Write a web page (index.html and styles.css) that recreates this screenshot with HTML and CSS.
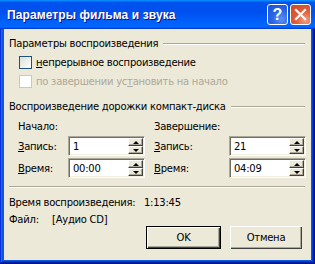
FILE: index.html
```html
<!DOCTYPE html>
<html lang="ru">
<head>
<meta charset="utf-8">
<title>Параметры фильма и звука</title>
<link rel="stylesheet" href="styles.css">
</head>
<body>
<div class="window">
  <div class="titlebar">
    <span class="title">Параметры фильма и звука</span>
    <div class="tbtns">
      <div class="tbtn help">?</div>
      <div class="tbtn close">
        <svg width="13" height="13" viewBox="0 0 13 13"><path d="M2 2 L11 11 M11 2 L2 11" stroke="#fff" stroke-width="2.2" stroke-linecap="square"/></svg>
      </div>
    </div>
  </div>
  <div class="client">
    <div class="group-head"><span>Параметры воспроизведения</span><div class="rule"></div></div>
    <div class="checks">
      <div class="check"><span class="box"></span><span><u>н</u>епрерывное воспроизведение</span></div>
      <div class="check disabled"><span class="box"></span><span>по завершении ус<u>т</u>ановить на начало</span></div>
    </div>
    <div class="group-head second"><span>Воспроизведение дорожки компакт-диска</span><div class="rule"></div></div>
    <div class="track">
      <div class="col-head">Начало:</div>
      <div class="col-head right">Завершение:</div>
      <div class="lbl"><u>З</u>апись:</div>
      <div class="field"><span class="val">1</span><div class="spin"><div class="sb up"></div><div class="sb down"></div></div></div>
      <div></div>
      <div class="lbl"><u>З</u>апись:</div>
      <div class="field"><span class="val">21</span><div class="spin"><div class="sb up"></div><div class="sb down"></div></div></div>
      <div class="lbl"><u>В</u>ремя:</div>
      <div class="field"><span class="val">00:00</span><div class="spin"><div class="sb up"></div><div class="sb down"></div></div></div>
      <div></div>
      <div class="lbl"><u>В</u>ремя:</div>
      <div class="field"><span class="val">04:09</span><div class="spin"><div class="sb up"></div><div class="sb down"></div></div></div>
    </div>
    <div class="sep"></div>
    <div class="info">
      <div class="info-row"><span class="dur-label">Время воспроизведения:</span><span>1:13:45</span></div>
      <div class="info-row"><span class="file-label">Файл:</span><span>[Аудио CD]</span></div>
    </div>
    <div class="buttons">
      <div class="btn default">OK</div>
      <div class="btn cancel">Отмена</div>
    </div>
  </div>
</div>
</body>
</html>
```

FILE: styles.css
```css
html, body {
  margin: 0;
  padding: 0;
  background: #ECE9D8;
}
.window {
  width: 315px;
  height: 264px;
  box-sizing: border-box;
  padding: 0 4px 4px 4px;
  background: #0A5BE0;
  box-shadow: inset -1px -1px #00138c, inset 1px 0 #0831d9, inset -2px -2px #001ea0, inset 2px 0 #166aee, inset -3px -3px #003bda, inset 3px 0 #0855dd;
  display: flex;
  flex-direction: column;
  font-family: "DejaVu Sans", sans-serif;
  font-size: 10px;
  letter-spacing: -0.25px;
  color: #000;
}
.titlebar {
  height: 29px;
  margin: 0 -4px;
  padding: 0 4px 0 7px;
  box-sizing: border-box;
  background: linear-gradient(180deg, #0997ff, #0053ee 8%, #0050ee 40%, #06f 88%, #06f 93%, #005bff 95%, #003dd7 96%, #003dd7);
  display: flex;
  align-items: center;
  justify-content: space-between;
}
.title {
  color: #fff;
  font-family: "Liberation Sans", sans-serif;
  font-weight: bold;
  font-size: 12px;
  letter-spacing: 0.1px;
  text-shadow: 1px 1px #0f1089;
}
.tbtns {
  display: flex;
  gap: 2px;
}
.tbtn {
  width: 21px;
  height: 21px;
  box-sizing: border-box;
  border: 1px solid #fff;
  border-radius: 3px;
  display: flex;
  align-items: center;
  justify-content: center;
}
.help {
  background: radial-gradient(circle at 70% 75%, #5c91f5 0%, #2b66e6 45%, #1b50d6 100%);
  color: #fff;
  font-family: "Liberation Sans", sans-serif;
  font-weight: bold;
  font-size: 16px;
  letter-spacing: 0;
  line-height: 1;
}
.close {
  background: radial-gradient(circle at 75% 80%, #f2a183 0%, #e2603f 40%, #cd4423 100%);
}
.client {
  flex: 1;
  background: #ECE9D8;
  padding: 8px 6px 0 5px;
  display: flex;
  flex-direction: column;
}
.group-head {
  display: flex;
  align-items: center;
  gap: 5px;
  height: 13px;
  line-height: 13px;
  white-space: nowrap;
}
.group-head.second {
  margin-top: 12px;
}
.rule {
  flex: 1;
  height: 1px;
  background: #ACA899;
  border-bottom: 1px solid #fff;
}
.checks {
  display: flex;
  flex-direction: column;
  gap: 6px;
  margin-top: 6px;
  padding-left: 10px;
}
.check {
  display: flex;
  align-items: center;
  gap: 4px;
  height: 13px;
  white-space: nowrap;
}
.box {
  width: 13px;
  height: 13px;
  box-sizing: border-box;
  border: 1px solid #1C5180;
  background: linear-gradient(135deg, #DCDCD7, #fff);
}
.check.disabled {
  color: #ACA899;
}
.check.disabled .box {
  border-color: #CAC8BB;
  background: #fff;
}
.track {
  display: grid;
  grid-template-columns: 50px 77px 9px 75px 77px;
  grid-template-rows: 14px 20px 20px;
  row-gap: 2px;
  margin-top: 7px;
  padding-left: 9px;
}
.col-head {
  grid-column: span 3;
  line-height: 13px;
}
.col-head.right {
  grid-column: span 2;
}
.lbl {
  display: flex;
  align-items: center;
}
.field {
  box-sizing: border-box;
  border: 1px solid;
  border-color: #ACA899 #fff #fff #ACA899;
  box-shadow: inset 1px 1px #716F64, inset -1px -1px #F1EFE2;
  background: #fff;
  display: flex;
  align-items: center;
  justify-content: space-between;
  padding: 2px 1px 2px 4px;
}
.val {
  line-height: 13px;
}
.spin {
  width: 15px;
  height: 16px;
  display: flex;
  flex-direction: column;
}
.sb {
  flex: 1;
  box-sizing: border-box;
  background: #ECE9D8;
  border: 1px solid;
  border-color: #fff #404040 #404040 #fff;
  box-shadow: inset -1px -1px #ACA899;
  position: relative;
}
.sb::after {
  content: "";
  position: absolute;
  left: 4px;
  top: 2px;
  width: 0;
  height: 0;
  border-left: 3px solid transparent;
  border-right: 3px solid transparent;
}
.sb.up::after {
  border-bottom: 3px solid #000;
}
.sb.down::after {
  border-top: 3px solid #000;
}
.sep {
  margin-top: 8px;
  height: 1px;
  background: #ACA899;
  border-bottom: 1px solid #fff;
}
.info {
  margin-top: 8px;
  display: flex;
  flex-direction: column;
  gap: 4px;
}
.info-row {
  display: flex;
  height: 13px;
  line-height: 13px;
  white-space: nowrap;
}
.dur-label {
  flex: 0 0 135px;
}
.file-label {
  flex: 0 0 43px;
}
.buttons {
  display: flex;
  justify-content: flex-end;
  gap: 9px;
  padding-right: 3px;
}
.btn {
  height: 23px;
  box-sizing: border-box;
  display: flex;
  align-items: center;
  justify-content: center;
  background: #ECE9D8;
}
.btn.default {
  width: 75px;
  border: 1px solid #000;
  box-shadow: inset 1px 1px #fff, inset -1px -1px #404040, inset -2px -2px #ACA899;
}
.btn.cancel {
  width: 72px;
  box-shadow: inset 1px 1px #fff, inset -1px -1px #404040, inset -2px -2px #ACA899;
}
```
